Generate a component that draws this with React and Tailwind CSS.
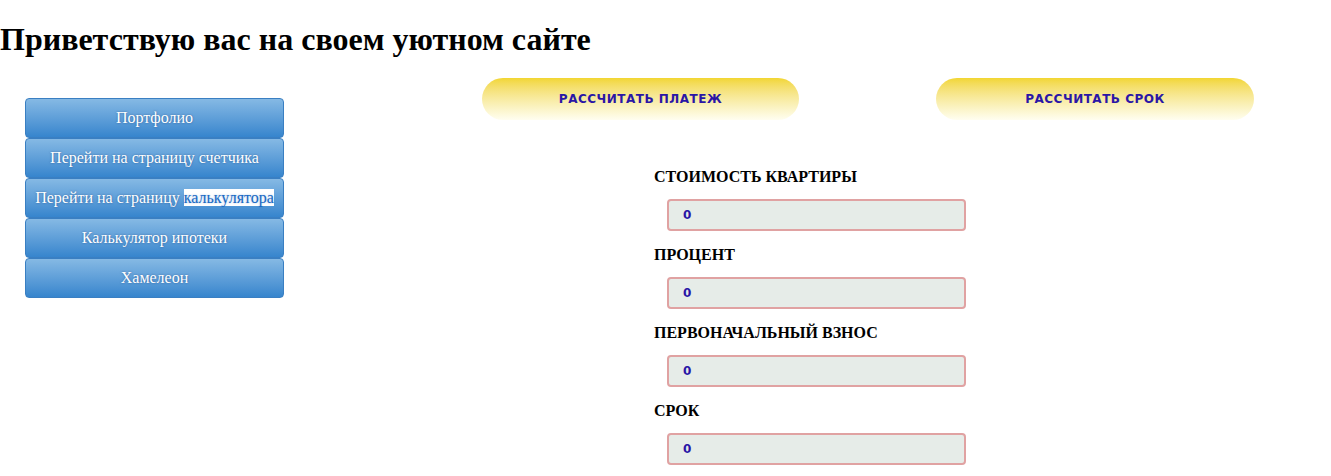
const menu = [
  { label: 'Портфолио' },
  { label: 'Перейти на страницу счетчика' },
  { label: 'Перейти на страницу ', mark: 'калькулятора' },
  { label: 'Калькулятор ипотеки' },
  { label: 'Хамелеон' },
];

const fields = ['Стоимость квартиры', 'Процент', 'Первоначальный взнос', 'Срок'];

const App = () => {
  return (
    <div className="min-h-[476px] bg-white font-['Liberation_Serif',serif] text-black">
      <h1 className="text-[32px] font-bold leading-[37px] pt-[21px] mb-[20px]">
        Приветствую вас на своем уютном сайте
      </h1>

      <div className="flex items-start">
        {/* Sidebar */}
        <nav className="ml-[25px] mt-[20px] w-[259px] flex flex-col">
          {menu.map((item) => (
            <a
              key={item.label}
              href="#"
              className="block h-[40px] leading-[38px] text-center whitespace-nowrap rounded-[4px] border border-[#3a7fc2] bg-gradient-to-b from-[#85b9e4] to-[#3685cd] text-[16px] text-white [text-shadow:0_0_2px_rgba(0,40,100,0.5)]"
            >
              {item.label}
              {item.mark && (
                <span className="bg-white text-[#1769c4] [text-shadow:0_0_2px_rgba(20,90,180,0.4)]">
                  {item.mark}
                </span>
              )}
            </a>
          ))}
        </nav>

        {/* Main */}
        <div className="ml-[198px] flex flex-col">
          <div className="flex gap-[137px]">
            <button className="w-[317px] h-[42px] rounded-[21px] bg-gradient-to-b from-[#f2d630] to-[#fffef0] font-['DejaVu_Sans',sans-serif] text-[12px] font-bold tracking-[0.5px] text-[#2a16a6]">
              РАССЧИТАТЬ ПЛАТЕЖ
            </button>
            <button className="w-[318px] h-[42px] rounded-[21px] bg-gradient-to-b from-[#f2d630] to-[#fffef0] font-['DejaVu_Sans',sans-serif] text-[12px] font-bold tracking-[0.5px] text-[#2a16a6]">
              РАССЧИТАТЬ СРОК
            </button>
          </div>

          <form className="ml-[172px] mt-[48px] flex flex-col">
            {fields.map((f) => (
              <div key={f} className="flex flex-col">
                <label className="text-[16px] font-bold uppercase leading-[18px]">{f}</label>
                <input
                  readOnly
                  value="0"
                  className="ml-[13px] mt-[13px] mb-[15px] w-[299px] h-[32px] rounded-[4px] border-2 border-[#e0a2a2] bg-[#e6ece8] pl-[14px] font-['DejaVu_Sans',sans-serif] text-[12px] font-bold text-[#2a16a6] outline-none"
                />
              </div>
            ))}
          </form>
        </div>
      </div>
    </div>
  );
};

export default App;
